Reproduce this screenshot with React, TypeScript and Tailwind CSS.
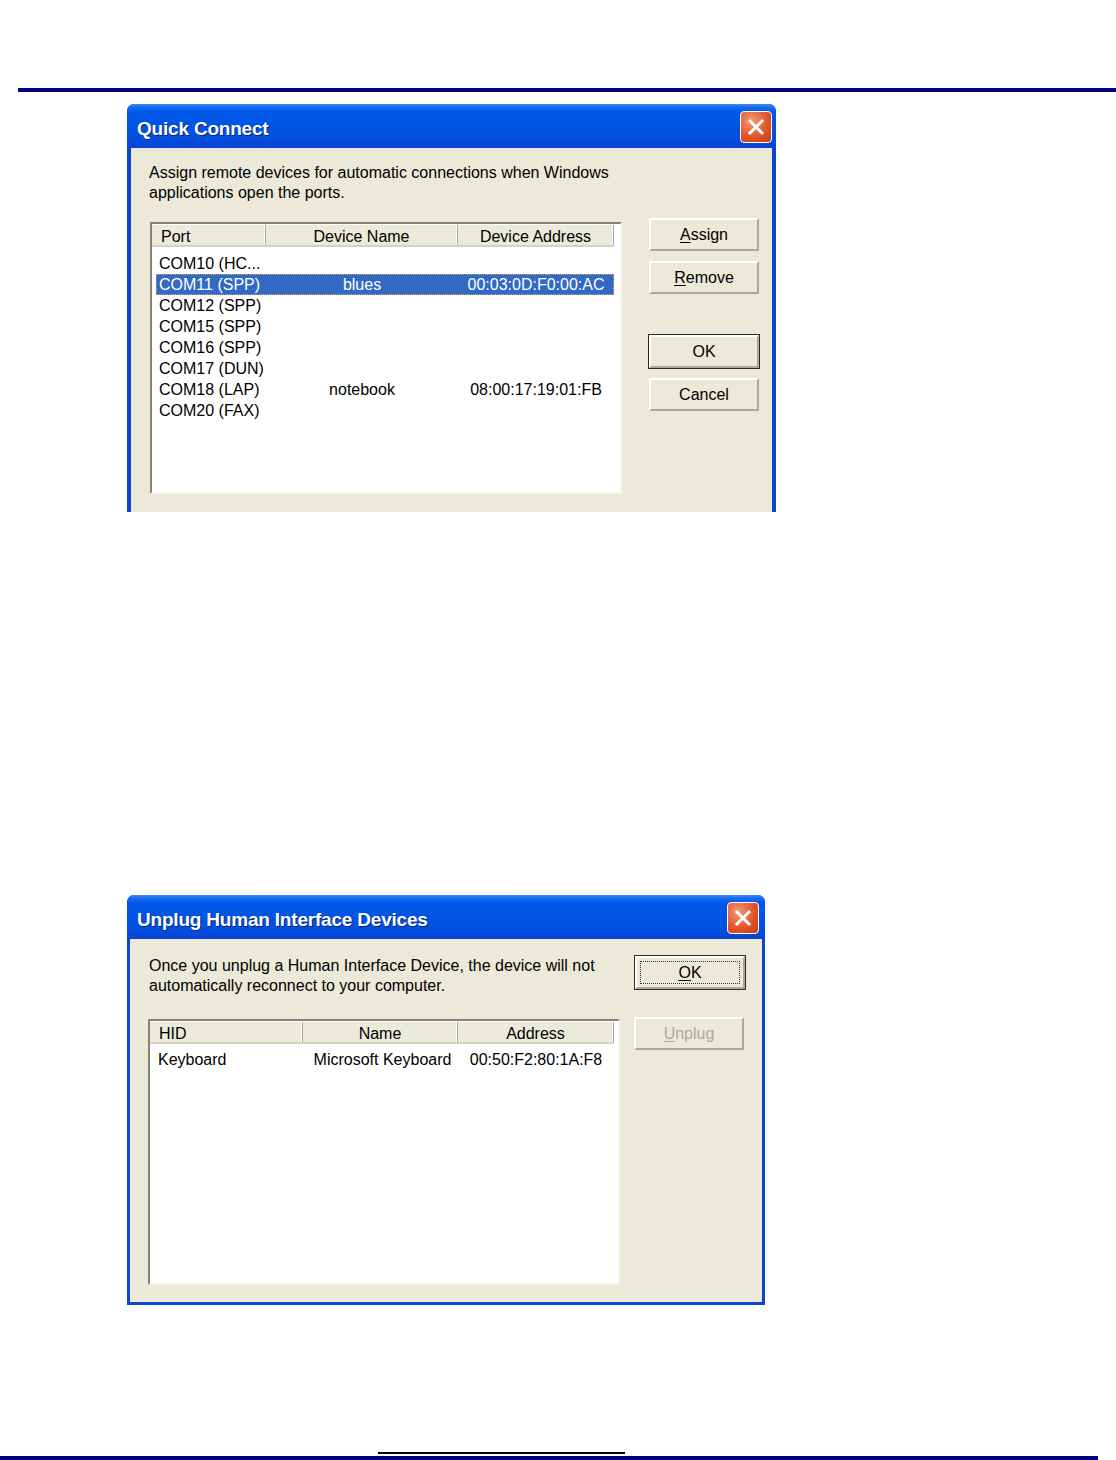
import React from "react";

const F = { fontFamily: '"Liberation Sans", Arial, sans-serif' };

function TitleBar({ title, closeRight }: { title: string; closeRight: number }) {
  return (
    <div className="relative h-[44px] rounded-t-[6px] bg-[linear-gradient(to_bottom,#3d8cf5_0px,#1a6cf0_3px,#0058ea_8px,#0052e0_30px,#0848d8_40px,#0a45d2_44px)] flex items-center pl-[10px] pt-[6px]">
      <span
        className="text-white font-bold text-[19px] tracking-[-0.2px] [text-shadow:1px_1px_0_#0a1e7a]"
        style={F}
      >
        {title}
      </span>
      <div
        className="absolute top-[7px] w-[32px] h-[32px] rounded-[4px] border-[1.5px] border-white bg-[radial-gradient(circle_at_35%_30%,#f29a78,#e2562c_55%,#c73a14)] flex items-center justify-center"
        style={{ right: closeRight }}
      >
        <svg width="20" height="20" viewBox="0 0 20 20">
          <path d="M4 4 L16 16 M16 4 L4 16" stroke="white" strokeWidth="3" strokeLinecap="square" />
        </svg>
      </div>
    </div>
  );
}

function Btn({
  children,
  def,
  focus,
  disabled,
}: {
  children: React.ReactNode;
  def?: boolean;
  focus?: boolean;
  disabled?: boolean;
}) {
  return (
    <div
      className={
        "w-[112px] h-[35px] flex items-center justify-center " +
        (def ? "border border-[#2b2b2b] " : "border border-transparent ")
      }
    >
      <div className="w-full h-full border-t-2 border-l-2 border-t-white border-l-white border-b-2 border-r-2 border-b-[#aca899] border-r-[#aca899] bg-[#ece9d8] flex items-center justify-center relative">
        {focus && (
          <div className="absolute inset-[3px] border border-dotted border-[#333]" />
        )}
        <span
          className={"text-[16px] " + (disabled ? "text-[#aca899]" : "text-black")}
          style={F}
        >
          {children}
        </span>
      </div>
    </div>
  );
}

function Header({ cols }: { cols: { label: string; w: number; align: "left" | "center" }[] }) {
  return (
    <div className="flex h-[22px] bg-[#ebeadb] border-b-2 border-b-[#d6d2c2]">
      {cols.map((c, i) => (
        <div
          key={i}
          className={
            "h-full flex items-center pt-[4px] border-r border-r-[#aca899] shadow-[inset_-1px_0_0_#fff] text-[16px] text-black " +
            (c.align === "left" ? "pl-[9px]" : "justify-center")
          }
          style={{ width: c.w, ...F }}
        >
          {c.label}
        </div>
      ))}
      <div className="flex-1" />
    </div>
  );
}

function QuickConnect() {
  const rows: [string, string, string][] = [
    ["COM10 (HC...", "", ""],
    ["COM11 (SPP)", "blues", "00:03:0D:F0:00:AC"],
    ["COM12 (SPP)", "", ""],
    ["COM15 (SPP)", "", ""],
    ["COM16 (SPP)", "", ""],
    ["COM17 (DUN)", "", ""],
    ["COM18 (LAP)", "notebook", "08:00:17:19:01:FB"],
    ["COM20 (FAX)", "", ""],
  ];
  return (
    <div className="w-[649px] h-[408px] flex flex-col rounded-t-[7px] bg-[#0a45d8] overflow-hidden">
      <TitleBar title="Quick Connect" closeRight={4} />
      <div className="flex-1 mx-[4px] bg-[#ece9d8] flex flex-col" style={F}>
        <div className="pl-[18px] pt-[15px] text-[16px] leading-[20px] text-black">
          <div>Assign remote devices for automatic connections when Windows</div>
          <div>applications open the ports.</div>
        </div>
        <div className="flex mt-[14px]">
          <div className="ml-[19px] mt-[5px] w-[472px] h-[272px] border-t-2 border-l-2 border-t-[#848278] border-l-[#848278] border-b-2 border-r-2 border-b-[#f5f4ef] border-r-[#f5f4ef] bg-white pt-[1px] pr-[6px]">
            <Header
              cols={[
                { label: "Port", w: 114, align: "left" },
                { label: "Device Name", w: 192, align: "center" },
                { label: "Device Address", w: 156, align: "center" },
              ]}
            />
            <div className="pt-[6px] pl-[4px]">
              {rows.map((r, i) => {
                const sel = i === 1;
                return (
                  <div
                    key={i}
                    className={
                      "flex h-[21px] items-center w-[458px] text-[16px] " +
                      (sel
                        ? "bg-[#316ac5] text-white outline-1 outline-dotted outline-[#d7a65a] -outline-offset-1"
                        : "text-black")
                    }
                  >
                    <div className="w-[110px] pl-[3px] whitespace-nowrap">{r[0]}</div>
                    <div className="w-[192px] text-center">{r[1]}</div>
                    <div className="w-[156px] text-center">{r[2]}</div>
                  </div>
                );
              })}
            </div>
          </div>
          <div className="ml-[26px] flex flex-col">
            <Btn>
              <span className="underline underline-offset-2">A</span>ssign
            </Btn>
            <div className="h-[8px]" />
            <Btn>
              <span className="underline underline-offset-2">R</span>emove
            </Btn>
            <div className="h-[39px]" />
            <Btn def>OK</Btn>
            <div className="h-[8px]" />
            <Btn>Cancel</Btn>
          </div>
        </div>
      </div>
    </div>
  );
}

function Unplug() {
  return (
    <div className="w-[638px] h-[410px] flex flex-col rounded-t-[7px] bg-[#0a45d8] overflow-hidden">
      <TitleBar title="Unplug Human Interface Devices" closeRight={6} />
      <div className="flex-1 mx-[3px] mb-[3px] bg-[#ece9d8] flex flex-col" style={F}>
        <div className="flex">
          <div className="pl-[19px] pt-[17px] text-[16px] leading-[20px] text-black w-[504px]">
            <div>Once you unplug a Human Interface Device, the device will not</div>
            <div>automatically reconnect to your computer.</div>
          </div>
          <div className="pt-[16px]">
            <Btn def focus>
              <span className="underline underline-offset-2">O</span>K
            </Btn>
          </div>
        </div>
        <div className="flex mt-[20px]">
          <div className="ml-[18px] mt-[3px] w-[472px] h-[266px] border-t-2 border-l-2 border-t-[#848278] border-l-[#848278] border-b-2 border-r-2 border-b-[#f5f4ef] border-r-[#f5f4ef] bg-white pt-[1px] pr-[4px]">
            <Header
              cols={[
                { label: "HID", w: 153, align: "left" },
                { label: "Name", w: 155, align: "center" },
                { label: "Address", w: 156, align: "center" },
              ]}
            />
            <div className="pt-[5px]">
              <div className="flex h-[21px] items-center text-[16px] text-black">
                <div className="w-[153px] pl-[8px]">Keyboard</div>
                <div className="w-[155px] text-center pl-[4px] whitespace-nowrap">Microsoft Keyboard</div>
                <div className="w-[156px] text-center whitespace-nowrap">00:50:F2:80:1A:F8</div>
              </div>
            </div>
          </div>
          <div className="ml-[13px]">
            <Btn disabled>
              <span className="underline underline-offset-2">U</span>nplug
            </Btn>
          </div>
        </div>
      </div>
    </div>
  );
}

export default function App() {
  return (
    <div className="w-[1116px] h-[1460px] bg-white flex flex-col relative overflow-hidden">
      <div className="h-[88px]" />
      <div className="h-[4px] ml-[18px] bg-[#000080]" />
      <div className="h-[12px]" />
      <div className="pl-[127px] h-[408px]">
        <QuickConnect />
      </div>
      <div className="h-[383px]" />
      <div className="pl-[127px] h-[410px]">
        <Unplug />
      </div>
      <div className="h-[147px]" />
      <div className="h-[2px] ml-[378px] w-[247px] bg-black" />
      <div className="h-[2px]" />
      <div className="h-[4px] w-[1098px] bg-[#000080]" />
    </div>
  );
}
